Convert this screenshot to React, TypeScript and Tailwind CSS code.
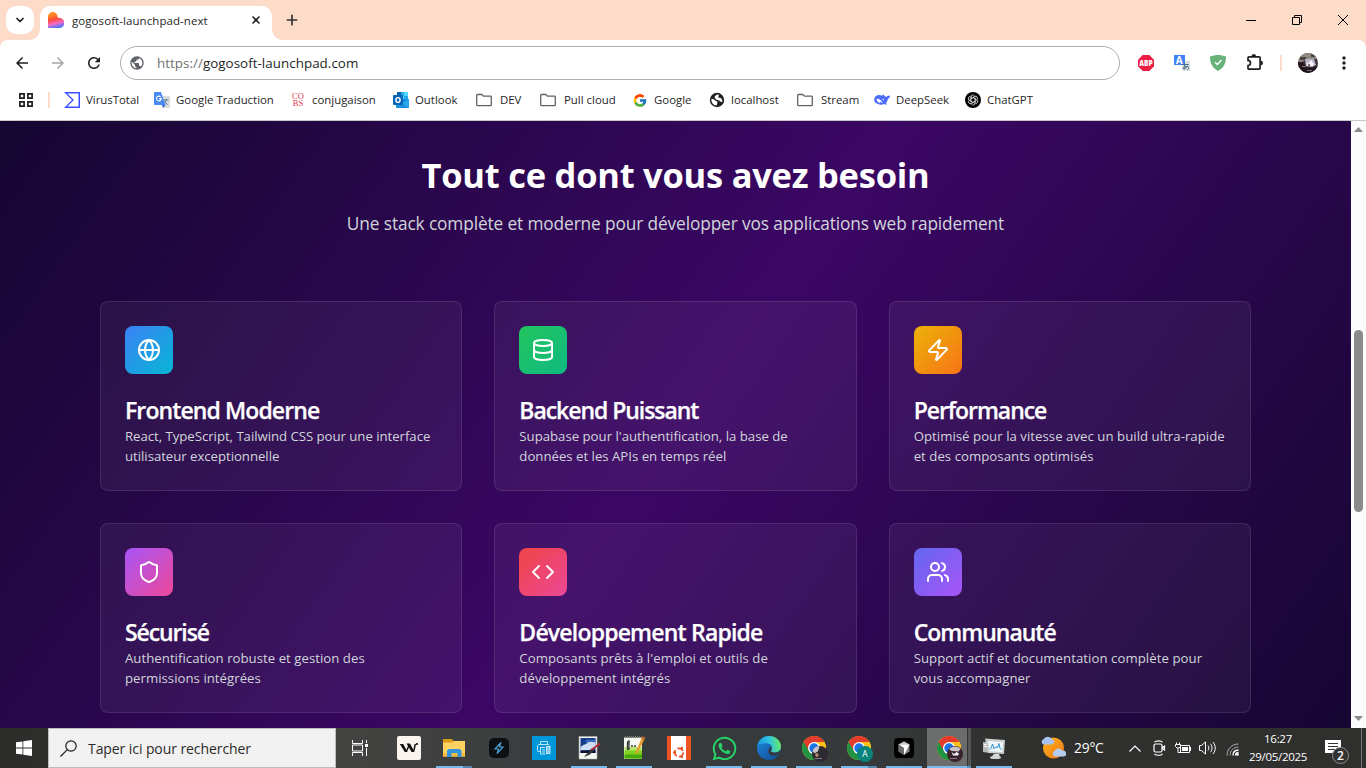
import React from "react";
import { Globe, Database, Zap, Shield, Code, Users, X, Plus, ChevronDown } from "lucide-react";
import { MdPublic, MdMoreVert, MdArrowBack, MdArrowForward, MdRefresh } from "react-icons/md";
import { FcGoogle } from "react-icons/fc";
import { FaWhatsapp } from "react-icons/fa";

const Folder = () => (
  <svg width="16" height="16" viewBox="0 0 16 16" fill="none" stroke="#5f6368" strokeWidth="1.3">
    <path d="M.7 3.2c0-.4.3-.7.7-.7h4.3l1.8 1.7h7.1c.4 0 .7.3.7.7v8c0 .4-.3.7-.7.7H1.4c-.4 0-.7-.3-.7-.7z" />
  </svg>
);

const VirusTotal = () => (
  <svg width="16" height="16" viewBox="0 0 16 16" fill="#394eff">
    <path d="M0 0h16v16H0l8-8zM3.4 1.5 9.9 8l-6.5 6.5h11.1v-13z" fillRule="evenodd" />
  </svg>
);

const GoogleTranslate = () => (
  <svg width="16" height="16" viewBox="0 0 16 16">
    <path d="M6 4h9a1 1 0 0 1 1 1v10a1 1 0 0 1-1 1H9z" fill="#dcdcdc" />
    <path d="M9.5 8h5M12 6.8V8c0 2-1 3.600-2.500 4.500M10.500 9.500c.8 1.400 1.800 2.300 3 3" stroke="#5b7d92" fill="none" />
    <path d="M1 0h6l4.500 13H1a1 1 0 0 1-1-1V1a1 1 0 0 1 1-1z" fill="#4a8af4" />
    <path d="m8 13 3.500 0L9 16z" fill="#3367d6" />
    <path d="M6.600 4.800A2.400 2.400 0 1 0 7.300 6.600H5.200" stroke="#fff" strokeWidth="1.100" fill="none" />
  </svg>
);

const Conjugaison = () => (
  <span className="flex h-4 w-4 flex-col items-center justify-center font-['Liberation_Serif',serif] text-[8.500px] leading-[7.500px] tracking-[0px] text-[#e0344c]">
    <span>CO</span>
    <span>BS</span>
  </span>
);

const Outlook = () => (
  <svg width="16" height="16" viewBox="0 0 16 16">
    <path d="M4 0h11v8H4z" fill="#28a8ea" />
    <path d="M4 0h4v4H4z" fill="#0a62ad" />
    <path d="M11 0h4v4h-4zM8 4h3v4H8z" fill="#50d9ff" />
    <path d="M3 7h13v8a1 1 0 0 1-1 1H4a1 1 0 0 1-1-1z" fill="#1490df" />
    <path d="m16 7-7 4.600L16 16z" fill="#28a8ea" />
    <rect y="3" width="10" height="10" rx="1" fill="#0864b6" />
    <ellipse cx="5" cy="8" rx="2.100" ry="2.400" fill="none" stroke="#fff" strokeWidth="1.400" />
  </svg>
);

const Localhost = () => (
  <svg width="16" height="16" viewBox="0 0 16 16">
    <circle cx="8" cy="8" r="7.200" fill="#202124" />
    <path d="M2.400 7c1.600-.2 3 .2 3.500 1.200.5.900 2.100.5 2.500 1.700.3 1-.8 1.500-.6 3.500-3.200.2-5.800-2.800-5.400-6.400z" fill="#fff" />
    <path d="M5.600 5c.2-1.600 1.800-1.200 2.300-2.400l1.900.2c.5 1.400-.8 1.600-.5 2.500.3.800 2.300.2 3.100 1.400.6.900 1.200 1.900.9 3-1.400.8-1.900-.8-3.200-1.300-1.300-.4-1.800.1-2.600-.7C6.700 6.900 5.500 6.300 5.600 5z" fill="#fff" />
  </svg>
);

const DeepSeek = () => (
  <svg width="16" height="16" viewBox="0 0 16 16">
    <path d="M.2 8.200C.1 5.200 2 3.300 4.500 3.100c1.500-.1 2.400.5 3.600.4.700-.1.300-1 .9-1.100.9 0 1.200 1.500 2.300 2.100.8.500 1.900.1 2.200-.6.300-.5.900 0 1.400-.1.400-.1.700-.6 1-.3.400.9-.4 2.600-1.600 3.200-.7.300-.6 1-.8 1.800-.4 1.200-1 2.100-1.700 2.800.5.500 1.200.5 1.300.9-.7.600-2.300.3-3.200-.100-1.200.7-2.800.9-4.500.4C2.500 11.700.3 10.400.200 8.200z" fill="#4d6bfe" />
    <path d="M2.500 7c2-.8 4.300.6 6.200 3.600-.9.500-1.800-.7-2.900-.8 0 .7.300 1.100-.100 1.200C4 10.400 2.800 9 2.500 7z" fill="#fff" />
    <path d="M8.300 6.600c.9-.2 1.700.6 1.900 1.500-.8.200-1.800-.5-1.900-1.500z" fill="#fff" />
  </svg>
);

const ChatGPT = () => (
  <svg width="16" height="16" viewBox="0 0 16 16">
    <circle cx="8" cy="8" r="8" fill="#000" />
    <g fill="none" stroke="#e8e8e8" strokeWidth=".65">
      {[0, 60, 120, 180, 240, 300].map((a) => (
        <path key={a} transform={`rotate(${a} 8 8)`} d="M5.800 9.300V5a2.200 2.200 0 0 1 4-1.200M5.900 6.700 9.200 4.900a2.200 2.200 0 0 1 2.500.3" />
      ))}
    </g>
  </svg>
);

const bookmarks = [
  { label: "VirusTotal", icon: <VirusTotal />, box: "w-[90px] gap-[6px]" },
  { label: "Google Traduction", icon: <GoogleTranslate />, box: "w-[136px] gap-[6px]" },
  { label: "conjugaison", icon: <Conjugaison />, box: "w-[103px] gap-[6px]" },
  { label: "Outlook", icon: <Outlook />, box: "w-[83px] gap-[6px]" },
  { label: "DEV", icon: <Folder />, box: "w-[64px] gap-[8px]" },
  { label: "Pull cloud", icon: <Folder />, box: "w-[92px] gap-[8px]" },
  { label: "Google", icon: <FcGoogle size={15} className="w-4" />, box: "w-[77px] gap-[6px]" },
  { label: "localhost", icon: <Localhost />, box: "w-[88px] gap-[6px]" },
  { label: "Stream", icon: <Folder />, box: "w-[77px] gap-[8px]" },
  { label: "DeepSeek", icon: <DeepSeek />, box: "w-[91px] gap-[6px]" },
  { label: "ChatGPT", icon: <ChatGPT />, box: "gap-[6px]" },
];

const Avatar = ({ size }: { size: number }) => (
  <svg width={size} height={size} viewBox="0 0 20 20">
    <defs>
      <clipPath id="avatar-clip">
        <circle cx="10" cy="10" r="10" />
      </clipPath>
    </defs>
    <g clipPath="url(#avatar-clip)">
      <rect width="20" height="20" fill="#3f3037" />
      <path d="M0 0h20v6H9L4 9H0z" fill="#8f8983" />
      <path d="M2 4h6v3H2zM13 1h4v3h-4z" fill="#4c453f" />
      <path d="M7 6h9l2 6-4 2-6-1z" fill="#b9b4c8" />
      <path d="m8 8 2 3 3-4 3 4-1 2H9z" fill="#f7f6fb" />
      <path d="M0 9h5l2 5-3 3-4-3z" fill="#2b1520" />
      <path d="M4 14.500h11l5-2V20H3z" fill="#20161d" />
      <path d="M9 17h5v1H9zM10 11h2v2h-2zM4 13h4v1H4z" fill="#7b6c74" />
    </g>
  </svg>
);

function BrowserChrome() {
  return (
    <header className="flex h-[121px] flex-col border-b border-[#c8c8c8] bg-white">
      <div className="flex h-10 shrink-0 bg-[#fcdbc9]">
        <div className="mt-[6px] ml-[6px] flex h-7 w-7 items-center justify-center rounded-[10px] bg-white">
          <ChevronDown size={12} strokeWidth={3.500} color="#1f1f1f" />
        </div>
        <div className="relative mt-[6px] ml-[6px] flex h-[34px] w-[232px] items-center rounded-t-[10px] bg-white pb-1 pl-2">
          <span className="absolute -left-[10px] bottom-0 h-[10px] w-[10px] bg-[radial-gradient(circle_at_top_left,transparent_9.500px,white_10px)]" />
          <span className="absolute -right-[10px] bottom-0 h-[10px] w-[10px] bg-[radial-gradient(circle_at_top_right,transparent_9.500px,white_10px)]" />
          <svg width="16" height="16" viewBox="0 0 16 16" className="mb-[2px]">
            <defs>
              <linearGradient id="heart" x1=".3" y1="0" x2=".55" y2="1">
                <stop offset=".15" stopColor="#ff8a1c" />
                <stop offset=".45" stopColor="#fb4a3e" />
                <stop offset=".7" stopColor="#f66bc0" />
                <stop offset="1" stopColor="#4b73ff" />
              </linearGradient>
            </defs>
            <path d="M0 4.800a4.800 4.800 0 0 1 9.600 0v.9h1.600a4.900 4.900 0 0 1 0 10.300H0z" fill="url(#heart)" />
          </svg>
          <span className="ml-2 text-[11.500px] leading-4 tracking-[0.07px] whitespace-nowrap text-[#1f1f1f]">gogosoft-launchpad-next</span>
          <X size={12} strokeWidth={3.200} color="#1f1f1f" className="mr-[10px] mb-[2px] ml-auto" />
        </div>
        <div className="mt-[12px] ml-[12px]">
          <Plus size={16} strokeWidth={2.500} color="#303030" />
        </div>
        <div className="ml-auto flex h-10">
          <div className="flex w-[46px] items-center justify-center">
            <span className="h-px w-[10px] bg-black" />
          </div>
          <div className="flex w-[46px] items-center justify-center">
            <svg width="10" height="10" viewBox="0 0 10 10" fill="none" stroke="#000">
              <path d="M.5 2.500h7v7h-7zM2.500 2.500v-2h7v7h-2" />
            </svg>
          </div>
          <div className="flex w-[46px] items-center justify-center">
            <svg width="10" height="10" viewBox="0 0 10 10" stroke="#000">
              <path d="m0 0 10 10M10 0 0 10" />
            </svg>
          </div>
        </div>
      </div>
      <div className="flex h-[46px] shrink-0 items-center bg-[#fcdbc9]">
        <div className="flex h-[46px] w-full items-center rounded-t-[8px] bg-white">
          <MdArrowBack size={18} className="ml-[13px] text-[#1f1f1f]" />
          <MdArrowForward size={18} className="ml-[18px] text-[#a6a6a6]" />
          <MdRefresh size={18} className="ml-[18px] text-[#1f1f1f]" />
          <div className="ml-[17px] flex h-[34px] w-[1000px] items-center rounded-full border border-[#adadad] pl-[8px]">
            <MdPublic size={16} className="text-[#5f6368]" />
            <span className="ml-[12px] text-[13.400px] leading-5 tracking-[0.03px] text-[#1f1f1f]">
              <span className="text-[#707070]">https://</span>gogosoft-launchpad.com
            </span>
          </div>
          <svg width="16" height="16" viewBox="0 0 16 16" className="ml-[18px] overflow-visible">
            <path d="M4.700 0h6.600L16 4.700v6.600L11.300 16H4.700L0 11.300V4.700z" fill="#ed1e45" />
            <text x="8" y="11" textAnchor="middle" fontSize="8" fontWeight="800" fill="#fff" textLength="13.400" lengthAdjust="spacingAndGlyphs">ABP</text>
          </svg>
          <svg width="16" height="16" viewBox="0 0 16 16" className="ml-[20px] overflow-visible">
            <path d="M6 6h10v10H9z" fill="#dcdfe0" />
            <rect width="11" height="10" fill="#3f83f2" />
            <text x="5.300" y="8.800" textAnchor="middle" fontSize="10" fontWeight="700" fill="#fff">A</text>
            <path d="M8 9.500h6.500M10.500 8c-.2 3 0 4.500.8 6M13.500 10.500c-1 2.500-3 4-4.200 3.300s1.500-3 4-2.300 1.500 3.200-.3 3.200" stroke="#43708a" fill="none" />
          </svg>
          <svg width="16" height="16" viewBox="0 0 16 16" className="ml-[20px]">
            <path d="M8 0c2.500 0 5.500.6 8 1.600 0 6.500-1.800 11-8 14.400C1.800 12.600 0 8.100 0 1.600 2.500.6 5.500 0 8 0z" fill="#67b279" />
            <path d="m5 7.200 2.300 2.300L11.500 5" stroke="#fff" strokeWidth="1.400" fill="none" />
          </svg>
          <svg width="18" height="18" viewBox="0 0 18 18" className="ml-[20px]">
            <path d="M3 2.800h10.200c.5 0 .9.400.9.900v10.600c0 .5-.4.900-.9.900H2.900c-.5 0-.9-.4-.9-.9v-2.800c3.300-.2 3.300-4.900 0-5.100V3.700c0-.5.400-.9 1-.9z" fill="none" stroke="#1f1f1f" strokeWidth="1.700" />
            <path d="M5.800 2.300a2 2 0 0 1 4 0zM14.800 7a2 2 0 0 1 0 4z" fill="#1f1f1f" stroke="#1f1f1f" strokeWidth=".5" />
          </svg>
          <span className="ml-[16px] h-4 w-[2px] bg-[#fcdbc9]" />
          <span className="ml-[16px]">
            <Avatar size={20} />
          </span>
          <MdMoreVert size={20} className="ml-[16px] text-[#1f1f1f]" />
        </div>
      </div>
      <div className="flex h-[28px] items-center">
        <svg width="14" height="14" viewBox="0 0 14 14" fill="none" stroke="#1f1f1f" strokeWidth="1.700" className="ml-[19px]">
          <path d="M.9.9h4.200v4.200H.9zM8.900.9h4.200v4.200H8.900zM.9 8.900h4.200v4.200H.9zM8.900 8.900h4.200v4.200H8.900z" />
        </svg>
        <span className="mr-[14px] ml-[15px] h-4 w-[2px] bg-[#fcdbc9]" />
        {bookmarks.map((b) => (
          <div key={b.label} className={`flex shrink-0 items-center whitespace-nowrap ${b.box}`}>
            {b.icon}
            <span className="text-[11.400px] leading-4 text-[#1f1f1f]">{b.label}</span>
          </div>
        ))}
      </div>
    </header>
  );
}

const features = [
  { icon: Globe, tile: "from-[#3b82f6] to-[#06b6d4]", title: "Frontend Moderne", head: "tracking-[-0.9px]", body: "tracking-[-0.03px]", lines: ["React, TypeScript, Tailwind CSS pour une interface", "utilisateur exceptionnelle"] },
  { icon: Database, tile: "from-[#22c55e] to-[#10b981]", title: "Backend Puissant", head: "tracking-[-1.050px]", body: "tracking-[0px]", lines: ["Supabase pour l'authentification, la base de", "données et les APIs en temps réel"] },
  { icon: Zap, tile: "from-[#eab308] to-[#f97316]", title: "Performance", head: "tracking-[-1.050px]", body: "tracking-[0.04px]", lines: ["Optimisé pour la vitesse avec un build ultra-rapide", "et des composants optimisés"] },
  { icon: Shield, tile: "from-[#a855f7] to-[#ec4899]", title: "Sécurisé", head: "tracking-[-1.100px]", body: "tracking-[0.03px]", lines: ["Authentification robuste et gestion des", "permissions intégrées"] },
  { icon: Code, tile: "from-[#ef4444] to-[#ec4899]", title: "Développement Rapide", head: "tracking-[-0.8px]", body: "tracking-[0.05px]", lines: ["Composants prêts à l'emploi et outils de", "développement intégrés"] },
  { icon: Users, tile: "from-[#6366f1] to-[#a855f7]", title: "Communauté", head: "tracking-[-1px]", body: "tracking-[0.06px]", lines: ["Support actif et documentation complète pour", "vous accompagner"] },
];

function FeaturePage() {
  return (
    <main className="h-full flex-1 bg-[linear-gradient(to_bottom_right,#020617,#3b0764,#020617)] bg-[length:100%_1918px] bg-[position:0_-644px] px-[100px] pt-[34px]">
      <h2 className="text-center text-[34.500px] leading-10 font-bold tracking-[-0.25px] text-white">Tout ce dont vous avez besoin</h2>
      <p className="mt-[15px] text-center text-[17.300px] leading-7 tracking-[-0.120px] text-[#d1d5db]">
        Une stack complète et moderne pour développer vos applications web rapidement
      </p>
      <div className="mt-[63px] grid grid-cols-3 gap-8">
        {features.map(({ icon: Icon, tile, title, head, body, lines }) => (
          <article key={title} className="h-[190px] rounded-lg border border-white/10 bg-white/5 p-6">
            <div className={`flex h-12 w-12 items-center justify-center rounded-lg bg-linear-to-br/srgb ${tile}`}>
              <Icon size={24} color="#fff" />
            </div>
            <h3 className={`mt-6 text-[23px] leading-6 font-semibold whitespace-nowrap text-white [-webkit-text-stroke:0.25px_white] ${head}`}>{title}</h3>
            <p className={`mt-1 text-[13.200px] leading-5 whitespace-nowrap text-[#d1d5db] ${body}`}>
              {lines[0]}
              <br />
              {lines[1]}
            </p>
          </article>
        ))}
      </div>
    </main>
  );
}

function Scrollbar() {
  return (
    <div className="flex w-[15px] flex-col items-center bg-[#fcfcfc]">
      <svg width="9" height="5" viewBox="0 0 9 5" fill="#8b8b8b" className="mt-[6px]">
        <path d="M4.500 0 9 5H0z" />
      </svg>
      <div className="mt-[198px] h-[182px] w-[9px] rounded-full bg-[#8b8b8b]" />
      <svg width="9" height="5" viewBox="0 0 9 5" fill="#8b8b8b" className="mt-auto mb-[7px]">
        <path d="M4.500 5 9 0H0z" />
      </svg>
    </div>
  );
}

const ChromeLogo = ({ children }: { children?: React.ReactNode }) => (
  <svg width="26" height="26" viewBox="0 0 26 26">
    <circle cx="12" cy="12" r="12" fill="#fbc116" />
    <path d="M12 12 1.600 6A12 12 0 0 0 12 24l5-9z" fill="#229342" />
    <path d="M12 24A12 12 0 0 0 22.400 6H12l5 9z" fill="#fbc116" />
    <path d="M1.600 6a12 12 0 0 1 20.800 0H12L7 15z" fill="#e33b2e" />
    <circle cx="12" cy="12" r="6" fill="#fff" />
    <circle cx="12" cy="12" r="4.700" fill="#1a73e8" />
    {children}
  </svg>
);

const PhotoBadge = ({ dark }: { dark: boolean }) => (
  <g>
    <circle cx="18" cy="18" r="8" fill={dark ? "#2d2a33" : "#3a222d"} />
    <path d={dark ? "M10.500 15.500c1-4 4-5.500 7-5.200l-1.500 5-3 2z" : "M12 13c3-3 8-3.500 11.500 0l-2 2.500-7-.5z"} fill="#c9c4c8" />
    <path d={dark ? "m13 18 2.500-1 1.500 3-3 1z" : "m14.500 16 2.500 2 2.500-2 2.500 1.500-1 2h-5z"} fill={dark ? "#b98a6d" : "#f3f1f6"} />
    <path d="M13 22h7v1h-7z" fill="#8a7d86" />
  </g>
);

const taskIcons = [
  {
    id: "w",
    bar: "",
    icon: (
      <svg width="24" height="24" viewBox="0 0 24 24">
        <rect width="24" height="24" rx="2" fill="#fbf4ee" />
        <path d="M2.800 8h3.400l4.300 8H7.800zM9.500 7.500H13l4.500 8.500h-2.900z" fill="#111" />
        <path d="m9.300 15.500 2.500-5.500M16.300 15.500C18 13.500 17 11 18.500 8" stroke="#111" strokeWidth="1.500" fill="none" />
        <circle cx="20" cy="8" r="1.100" fill="#111" />
      </svg>
    ),
  },
  {
    id: "explorer",
    bar: "split",
    icon: (
      <svg width="24" height="24" viewBox="0 0 24 24">
        <path d="M1 3h9l1.500 2H22v5H1z" fill="#dd9a14" />
        <path d="M1 6.500h9L11.500 5H23v15.500H1z" fill="#ffd262" />
        <path d="M1 17h22v3.500H1z" fill="#f9bd42" />
        <path d="M5 21v-6.500L7 13h10.500l2 1.500V21h-4v-4h-6v4z" fill="#3393dc" />
      </svg>
    ),
  },
  {
    id: "bolt",
    bar: "",
    icon: (
      <svg width="24" height="24" viewBox="0 0 24 24">
        <rect x="2" y="2" width="20" height="20" rx="5" fill="#0d0f12" />
        <path d="M14 6.500 8 13h3.500L10 17.500 16 11h-3.500z" fill="none" stroke="#4a9fcd" strokeWidth="1.200" />
      </svg>
    ),
  },
  {
    id: "printer",
    bar: "",
    icon: (
      <svg width="24" height="24" viewBox="0 0 24 24">
        <rect width="24" height="24" fill="#0096d9" />
        <g fill="none" stroke="#d3eefa" strokeWidth=".9">
          <path d="M8.500 8V5.500h7V8M8 15.500H6l-.5-1v-5l1-1h10l1 1v1M8 11.500h5M8.500 11.500v6.500h5M10 14h3M10 16h3" />
          <rect x="14.500" y="10.500" width="3.500" height="7" fill="#7cc9ea" />
        </g>
      </svg>
    ),
  },
  {
    id: "paint",
    bar: "full",
    icon: (
      <svg width="24" height="24" viewBox="0 0 24 24">
        <rect x="2" y=".5" width="18" height="22.500" fill="#f6f6f2" stroke="#aaa" strokeWidth=".6" />
        <rect x="3.500" y="2" width="15" height="15" fill="#183d8c" />
        <path d="M9 4c3-1 5 1 9.500-1v5c-4 2-6 0-9 2z" fill="#3e6cc0" />
        <path d="M3.500 12c2-4 5-3 7-5s5 0 8-1v6l-6 2-9 .5z" fill="#cfdff3" />
        <path d="M3.500 14.500h15V17h-15z" fill="#07142c" />
        <path d="m23 7.500-9.500 7" stroke="#bd2830" strokeWidth="1.800" />
        <path d="M14.500 13.500 9 18.500l-2 2.500 6-2.500 3-3z" fill="#353638" />
      </svg>
    ),
  },
  {
    id: "notepad",
    bar: "full",
    icon: (
      <svg width="24" height="24" viewBox="0 0 24 24">
        <path d="M2 1.500h18V23H2z" fill="#f5f8ee" />
        <path d="M2.500 11H20v11.500H2.500z" fill="#b5e66b" />
        <path d="M2.500 14.500H20v8H2.500z" fill="#7fd01f" />
        <path d="M2.500 18.500H20v4H2.500z" fill="#47a90b" />
        <path d="M3 1h16" stroke="#777" strokeWidth="2" strokeDasharray="1 1" />
        <path d="M5.500 14V7c0-1.500 1-2 1.500-2v9M9 10h2M12 10h2" stroke="#34383b" strokeWidth="1.300" fill="none" />
        <path d="m20 1-6 14.500-.5 3 2.500-2.200L23 2z" fill="#e99d30" />
        <path d="m20 0 3.500 1.500L22.500 4l-3.300-1.500z" fill="#a96732" />
      </svg>
    ),
  },
  {
    id: "ubuntu",
    bar: "",
    icon: (
      <svg width="24" height="24" viewBox="0 0 24 24">
        <rect width="24" height="24" fill="#fff" />
        <path d="M0 0h4v24H0zM19 0h5v24h-5z" fill="#e95420" />
        <circle cx="12" cy="16.500" r="4.200" fill="none" stroke="#e95420" strokeWidth="1.800" strokeDasharray="6.500 2.300" />
        <circle cx="7.200" cy="16.500" r="1.300" fill="#e95420" />
        <circle cx="14.800" cy="12" r="1.300" fill="#e95420" />
        <circle cx="14.800" cy="21" r="1.300" fill="#e95420" />
      </svg>
    ),
  },
  { id: "whatsapp", bar: "full", icon: <FaWhatsapp size={27} color="#25d366" className="-m-[1.500px]" /> },
  {
    id: "edge",
    bar: "full",
    icon: (
      <svg width="24" height="24" viewBox="0 0 24 24">
        <defs>
          <linearGradient id="edge-top" x1="0" y1=".5" x2="1" y2=".4">
            <stop offset="0" stopColor="#1b91de" />
            <stop offset=".5" stopColor="#2fc2df" />
            <stop offset="1" stopColor="#68ea62" />
          </linearGradient>
          <linearGradient id="edge-low" x1="0" y1="0" x2="1" y2="1">
            <stop offset="0" stopColor="#1c88dd" />
            <stop offset="1" stopColor="#124a93" />
          </linearGradient>
        </defs>
        <circle cx="12" cy="12" r="12" fill="url(#edge-low)" />
        <path d="M.2 10C1.500 3.500 6.500 0 12 0c7 0 12 5 12 10.500 0 3.700-3 6-6.200 6-2.800 0-4.300-1-3.600-2.300 2.200-3.200-.5-7-5-7C5 7.200 1.500 8.500.2 10z" fill="url(#edge-top)" />
        <path d="M14 14.200c-.8 1.300.8 2.700 4 2.500 2.200 0 4-1 5-2l.5 1.500c-2 3.500-7.500 4.700-10.300 2.500-2.500-2-2.500-6 .8-8 1 1 .9 2.200 0 3.500z" fill="#363a3b" />
      </svg>
    ),
  },
  { id: "chrome-1", bar: "full", icon: <ChromeLogo><PhotoBadge dark /></ChromeLogo> },
  {
    id: "chrome-2",
    bar: "split",
    icon: (
      <ChromeLogo>
        <circle cx="18" cy="18" r="8" fill="#08847a" />
        <text x="18" y="21" textAnchor="middle" fontSize="8.500" fill="#fff">A</text>
      </ChromeLogo>
    ),
  },
  {
    id: "cursor",
    bar: "full",
    icon: (
      <svg width="24" height="24" viewBox="0 0 24 24">
        <rect x="2" y="2" width="20" height="20" rx="4" fill="#000" />
        <path d="m12 5.500 5.500 3v7L12 19l-5.500-3.500v-7z" fill="#8a8a8a" />
        <path d="m6.500 8.500 5.500-3 5.500 3z" fill="#c9c9c9" />
        <path d="M6.500 8.500h11L12 19v-7z" fill="#fff" />
        <path d="M6.500 8.500 12 12v7l-5.500-3.500z" fill="#6b6b6b" />
      </svg>
    ),
  },
  { id: "chrome-3", bar: "active", icon: <ChromeLogo><PhotoBadge dark={false} /></ChromeLogo> },
  {
    id: "monitor",
    bar: "full",
    icon: (
      <svg width="24" height="24" viewBox="0 0 24 24">
        <path d="M1 6h7v11l-7-1z" fill="#b5bab8" />
        <path d="M2 8h5v1H2zM2 10h5v1H2z" fill="#fff" />
        <path d="M3 2.500 23 4l-1 14-16-1z" fill="#c9cecc" />
        <path d="m6 5 15 1-.7 10-13-.8z" fill="#eef7fb" />
        <path d="m7.500 13.500 1.500-1 1.500-4.500 1.500 5 2-2.500 1.500 1.500L17 7.500l1 5 1.500 1" fill="none" stroke="#2389c8" strokeWidth=".9" />
        <path d="M12 18h5l1 3.500H9z" fill="#d7dad8" />
        <ellipse cx="13.500" cy="21.500" rx="5.500" ry="1.500" fill="#cfd3d2" />
      </svg>
    ),
  },
];

function Taskbar() {
  return (
    <footer className="flex h-10 shrink-0 bg-[linear-gradient(90deg,#2b2b29_0px,#434341_340px,#3e403f_460px,#363b3d_600px,#363a3b_860px,#30302e_1010px,#2f302e_1366px)] text-white">
      <div className="flex w-12 items-center justify-center">
        <svg width="16" height="16" viewBox="0 0 16 16" fill="#fff">
          <path d="M0 2.300 6.500 1.400v6.200H0zM7.300 1.300 16 0v7.600H7.300zM0 8.400h6.500v6.200L0 13.700zM7.300 8.400H16V16l-8.700-1.300z" />
        </svg>
      </div>
      <div className="flex w-[288px] items-center border border-[#bdbdbd] bg-[#f1f1f1] pl-[11px]">
        <svg width="17" height="17" viewBox="0 0 17 17" fill="none" stroke="#1b1b1b" strokeWidth="1.200">
          <circle cx="11" cy="6" r="5.200" />
          <path d="M7.300 9.700.5 16.500" />
        </svg>
        <span className="mt-px ml-[11px] text-[14px] leading-5 tracking-[-0.08px] whitespace-nowrap text-[#2b2b2b]">Taper ici pour rechercher</span>
      </div>
      <div className="flex w-[51px] items-center pl-[16px]">
        <svg width="16" height="16" viewBox="0 0 16 16" fill="none" stroke="#fff">
          <path d="M.5 0v3.500h10V0M.5 16v-3.500h10V16M.5 5h10v6H.5zM14.500 0v3M14.500 8v8" />
          <path d="M13 4h3v3h-3z" fill="#fff" stroke="none" />
        </svg>
      </div>
      {taskIcons.map((t) => (
        <div key={t.id} className="relative flex h-10 w-[45px] shrink-0 items-start pt-2 pl-[10px]">
          {t.bar === "active" && (
            <>
              <span className="absolute inset-y-0 left-0 w-10 bg-[#6b6c6c]" />
              <span className="absolute inset-y-0 left-[41px] w-[3px] bg-[#555757]" />
              <span className="absolute bottom-0 left-0 h-[2px] w-10 bg-[#76b9ed]" />
              <span className="absolute bottom-0 left-[40px] h-[2px] w-1 bg-[#5e94bd]" />
            </>
          )}
          {t.bar === "full" && <span className="absolute bottom-0 left-1 h-[2px] w-9 bg-[#76b9ed]" />}
          {t.bar === "split" && (
            <>
              <span className="absolute bottom-0 left-1 h-[2px] w-[27px] bg-[#76b9ed]" />
              <span className="absolute bottom-0 left-[31px] h-[2px] w-[9px] bg-[#5286ae]" />
            </>
          )}
          <span className="relative block shrink-0">{t.icon}</span>
        </div>
      ))}
      <div className="flex flex-1 items-center">
        <svg width="26" height="24" viewBox="0 0 26 24" className="ml-[24px]">
          <defs>
            <linearGradient id="sun" x1="0" y1="0" x2="1" y2="1">
              <stop offset="0" stopColor="#ffb51b" />
              <stop offset="1" stopColor="#ef7615" />
            </linearGradient>
          </defs>
          <circle cx="12.500" cy="12" r="10.500" fill="url(#sun)" />
          <path d="M2.500 8.500a2.800 2.800 0 0 1 0-5.300 5 5 0 0 1 8.500 0c2.500 0 3.500 4-.5 5.300z" fill="#a8c3ee" />
          <path d="M13.500 20.500a3 3 0 0 1 0-5.500 4.500 4.500 0 0 1 8-.3 3 3 0 0 1 1.500 5.800z" fill="#b5ccf1" />
        </svg>
        <span className="ml-[7px] w-[55px] text-[13.800px] leading-5 tracking-[-0.2px]">29°C</span>
        <svg width="12" height="7" viewBox="0 0 12 7" fill="none" stroke="#fff" strokeWidth="1.200">
          <path d="m.5 6.500 5.500-5.500 5.500 5.500" />
        </svg>
        <svg width="13" height="16" viewBox="0 0 13 16" fill="none" stroke="#fff" strokeWidth="1.200" className="ml-[12px]">
          <rect x="1" y="4" width="8" height="8" rx="1.500" />
          <path d="m9 7.500 2.500-1.500v4L9 8.500M1.500 2.200C3 .3 8 .3 9.500 2.200M1.500 13.800c1.500 1.900 6.500 1.900 8 0" />
        </svg>
        <svg width="16" height="13" viewBox="0 0 16 13" fill="none" stroke="#fff" className="ml-[9px]">
          <path d="M5.500 3.500H14.500v7h-9z" />
          <path d="M7 5h6v4H7z" fill="#fff" stroke="none" />
          <path d="M15 5h1v4h-1z" fill="#fff" stroke="none" />
          <path d="M1.500.5v2M4.500.5v2M.5 2.500h5v2l-1.500 1.500h-2L.5 4.500zM3 6v4.500h3" />
        </svg>
        <svg width="17" height="14" viewBox="0 0 17 14" fill="none" stroke="#fff" className="ml-[8px]">
          <path d="M.5 4.500h2L6.500 1v12l-4-3.500h-2zM9 4.500c1.200 1.500 1.200 3.500 0 5M11.500 2.800c2 2.500 2 5.900 0 8.400M14 1c3 3.600 3 8.400 0 12" />
        </svg>
        <svg width="13" height="13" viewBox="0 0 13 13" fill="none" stroke="#aaa" className="mt-[2px] ml-[10px]">
          <path d="M1 12.500C1 6 6 1 12.500 1M4 12.500c0-5 3.500-8.500 8.500-8.500" />
          <path d="M7 12.500c0-3.500 2-5.500 5.500-5.500M9.500 12.500c0-2 1-3 3-3" stroke="#fff" strokeWidth="1.300" />
          <circle cx="11.500" cy="11.500" r="1.300" fill="#fff" stroke="none" />
        </svg>
        <div className="ml-[9px] flex w-[60px] flex-col items-center text-[11.500px] leading-[18px] tracking-[-0.3px] whitespace-nowrap">
          <span>16:27</span>
          <span>29/05/2025</span>
        </div>
        <svg width="26" height="26" viewBox="0 0 26 26" className="mt-[9px] ml-[17px]">
          <path d="M0 0h16v13h-4l-4 4v-4H0z" fill="#fff" />
          <path d="M3 3.500h10M3 6.500h10M3 9.500h7" stroke="#333" strokeWidth="1" />
          <circle cx="15.500" cy="15.500" r="8" fill="#323331" stroke="#8d8e8d" />
          <text x="15.500" y="19.500" textAnchor="middle" fontSize="12" fontWeight="600" fill="#fff">2</text>
        </svg>
        <span className="mr-1 ml-auto h-10 w-px bg-[#777876]" />
      </div>
    </footer>
  );
}

export default function App() {
  return (
    <div className="flex h-[768px] w-[1366px] flex-col overflow-hidden font-['Open_Sans','Noto_Sans',sans-serif]">
      <BrowserChrome />
      <div className="flex h-[607px] shrink-0">
        <FeaturePage />
        <Scrollbar />
      </div>
      <Taskbar />
    </div>
  );
}
